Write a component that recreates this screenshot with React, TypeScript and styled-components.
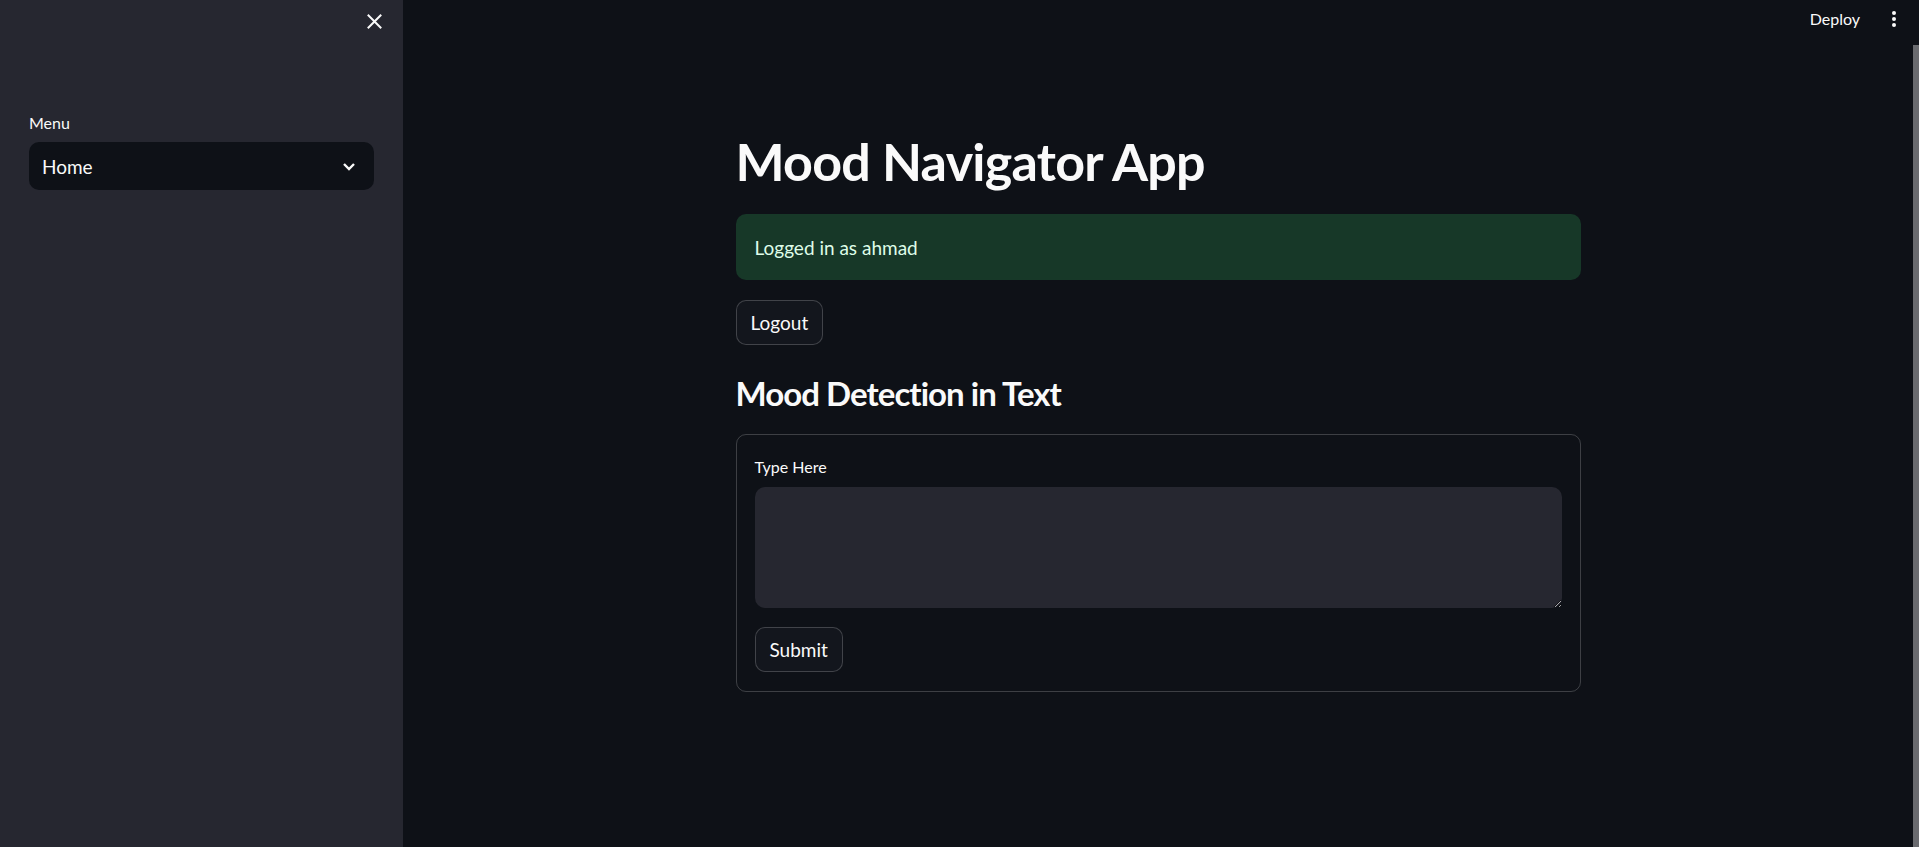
import React from 'react';
import styled, { createGlobalStyle } from 'styled-components';

const GlobalStyle = createGlobalStyle`
  html, body {
    margin: 0;
    padding: 0;
    background: #0e1117;
    font-family: Lato, "Noto Sans", sans-serif;
    color: #fafafa;
  }
  * {
    box-sizing: border-box;
  }
`;

const Shell = styled.div`
  display: flex;
  height: 847px;
  overflow: hidden;
`;

const Sidebar = styled.aside`
  width: 403px;
  flex-shrink: 0;
  background: #262730;
  display: flex;
  flex-direction: column;
  padding: 0 29px;
`;

const SidebarTop = styled.div`
  height: 112px;
  display: flex;
  justify-content: flex-end;
  align-items: flex-start;
  padding-top: 12px;
  margin-right: -10px;
`;

const IconButton = styled.button`
  background: none;
  border: none;
  padding: 0;
  width: 20px;
  height: 18px;
  display: flex;
  align-items: center;
  justify-content: center;
  color: #fafafa;
  cursor: pointer;
`;

const FieldLabel = styled.label`
  display: block;
  font-size: 16px;
  line-height: 22px;
  color: #fafafa;
  margin-bottom: ${({ $gap }: { $gap?: number }) => $gap ?? 8}px;
`;

const Select = styled.div`
  height: 48px;
  border-radius: 10px;
  background: #0e1117;
  display: flex;
  align-items: center;
  justify-content: space-between;
  padding: 0 18px 0 13px;
  font-size: 19px;
`;

const Main = styled.main`
  flex: 1;
  display: flex;
  flex-direction: column;
  min-width: 0;
`;

const Header = styled.header`
  height: 45px;
  flex-shrink: 0;
  display: flex;
  justify-content: flex-end;
  align-items: center;
  gap: 32px;
  padding: 0 23px 8px 0;
  font-size: 16px;
`;

const Dots = styled.div`
  display: flex;
  flex-direction: column;
  gap: 2px;
  span {
    width: 4px;
    height: 4px;
    border-radius: 50%;
    background: #fafafa;
  }
`;

const Body = styled.div`
  flex: 1;
  display: flex;
  min-height: 0;
`;

const Content = styled.div`
  flex: 1;
  display: flex;
  justify-content: center;
`;

const Column = styled.div`
  width: 845px;
  padding-top: 84px;
  display: flex;
  flex-direction: column;
`;

const Scrollbar = styled.div`
  width: 6px;
  background: #6a6b6f;
  flex-shrink: 0;
`;

const Title = styled.h1`
  margin: 0 0 21px;
  font-size: 52px;
  font-weight: 700;
  line-height: 64px;
  letter-spacing: -0.75px;
`;

const Alert = styled.div`
  height: 66px;
  border-radius: 10px;
  background: #173828;
  color: #dffde9;
  display: flex;
  align-items: center;
  padding: 0 19px;
  font-size: 19px;
`;

const Button = styled.button`
  align-self: flex-start;
  height: 45px;
  padding: 0 14px;
  border-radius: 10px;
  border: 1px solid rgba(250, 250, 250, 0.2);
  background: #13161d;
  color: #fafafa;
  font-family: inherit;
  font-size: 19px;
  margin-top: ${({ $top }: { $top?: number }) => $top ?? 0}px;
`;

const Subheader = styled.h3`
  margin: 26px 0 19px;
  font-size: 33px;
  font-weight: 700;
  line-height: 44px;
  letter-spacing: -0.95px;
`;

const Form = styled.form`
  border: 1px solid rgba(250, 250, 250, 0.2);
  border-radius: 10px;
  padding: 21px 18px 19px;
  display: flex;
  flex-direction: column;
`;

const TextArea = styled.textarea`
  height: 121px;
  border-radius: 10px;
  border: none;
  background: #262730;
  color: #fafafa;
  font-family: inherit;
  font-size: 19px;
  padding: 12px 14px;
  resize: vertical;
  outline: none;
`;

const App: React.FC = () => {
  return (
    <>
      <GlobalStyle />
      <Shell>
        <Sidebar>
          <SidebarTop>
            <IconButton aria-label="Close sidebar">
              <svg width="15" height="15" viewBox="0 0 15 15">
                <path d="M1.5 1.5 L13.5 13.5 M13.5 1.5 L1.5 13.5" stroke="#fafafa" strokeWidth="2" strokeLinecap="square" />
              </svg>
            </IconButton>
          </SidebarTop>
          <FieldLabel>Menu</FieldLabel>
          <Select>
            <span>Home</span>
            <svg width="14" height="9" viewBox="0 0 14 9">
              <path d="M2 2 L7 7 L12 2" stroke="#fafafa" strokeWidth="2.4" fill="none" />
            </svg>
          </Select>
        </Sidebar>
        <Main>
          <Header>
            <span>Deploy</span>
            <Dots>
              <span />
              <span />
              <span />
            </Dots>
          </Header>
          <Body>
            <Content>
              <Column>
                <Title>Mood Navigator App</Title>
                <Alert>Logged in as ahmad</Alert>
                <Button type="button" $top={20}>Logout</Button>
                <Subheader>Mood Detection in Text</Subheader>
                <Form onSubmit={(e) => e.preventDefault()}>
                  <FieldLabel $gap={9}>Type Here</FieldLabel>
                  <TextArea />
                  <Button type="submit" $top={19}>Submit</Button>
                </Form>
              </Column>
            </Content>
            <Scrollbar />
          </Body>
        </Main>
      </Shell>
    </>
  );
};

export default App;
